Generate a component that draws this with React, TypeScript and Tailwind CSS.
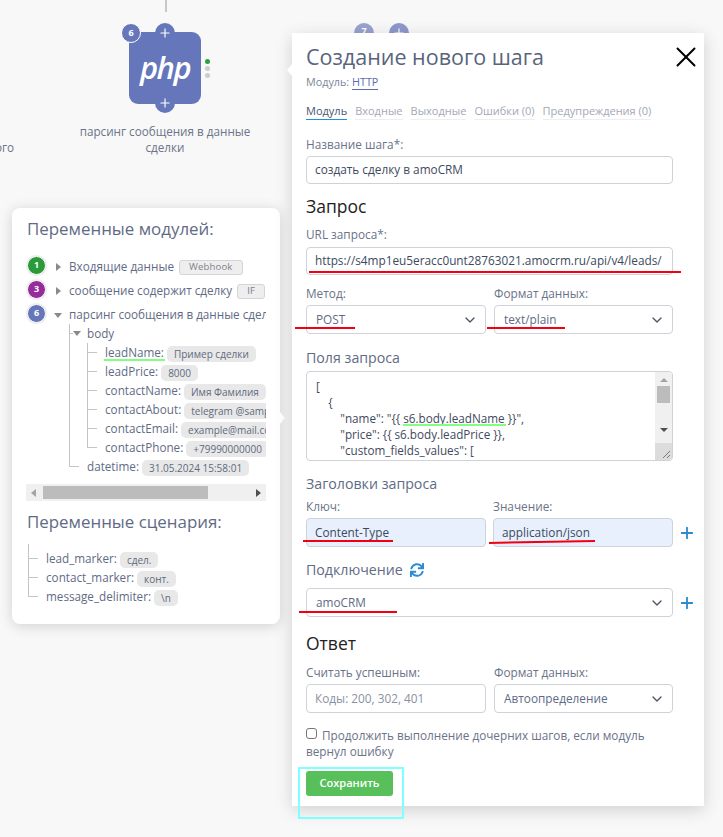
import React from "react";
import { ChevronDown, Plus, X } from "lucide-react";
import { FaSync } from "react-icons/fa";

const text = "text-[#5f6b85]";

function Tag({ children, boxed }: { children: React.ReactNode; boxed?: boolean }) {
  return (
    <span
      className={
        boxed
          ? "ml-[5px] inline-flex h-[15px] shrink-0 items-center rounded-[3px] border border-[#d5d5d5] bg-[#eeeeee] px-[9px] text-[9.5px] leading-none tracking-[0.2px] text-[#80808a]"
          : "ml-[3px] inline-flex h-[16px] shrink-0 translate-y-px items-center rounded-[5px] bg-[#e8e8e8] px-[7px] text-[10px] leading-none text-[#606a7e]"
      }
    >
      {children}
    </span>
  );
}

function Badge({ n, color }: { n: number; color: string }) {
  return (
    <span
      className={`mr-[8px] ml-px flex h-[19px] w-[19px] shrink-0 -translate-y-[2px] items-center justify-center rounded-full border border-white text-[9px] font-bold text-white shadow-[0_0_2px_#bbb] ${color}`}
    >
      {n}
    </span>
  );
}

function TriRight() {
  return <span className="mr-[6px] ml-[2px] h-0 w-0 shrink-0 border-y-[4px] border-l-[5px] border-y-transparent border-l-[#8a8a8a]" />;
}
function TriDown() {
  return <span className="mr-[5px] h-0 w-0 shrink-0 border-x-[4px] border-t-[5px] border-x-transparent border-t-[#8a8a8a]" />;
}

function Leaf({ name, value }: { name: string; value: string }) {
  return (
    <div className="flex h-[19px] items-center whitespace-nowrap">
      <span className="mr-[8px] h-px w-[10px] shrink-0 bg-[#c4c4c4]" />
      <span>{name}:</span>
      <Tag>{value}</Tag>
    </div>
  );
}

function Label({ children, className = "" }: { children: React.ReactNode; className?: string }) {
  return <div className={`text-[11.8px] leading-[16px] text-[#6a7389] ${className}`}>{children}</div>;
}

function Field({ children, className = "", blue }: { children: React.ReactNode; className?: string; blue?: boolean }) {
  return (
    <div
      className={`flex h-[28px] items-center overflow-hidden rounded-[4px] border border-[#cfd3d8] pl-[8px] text-[11.8px] whitespace-nowrap ${
        blue ? "bg-[#e8f0fe] text-[#3c4a60]" : "bg-white text-[#3f4a5e]"
      } ${className}`}
    >
      {children}
    </div>
  );
}

function Select({ children, className = "" }: { children: React.ReactNode; className?: string }) {
  return (
    <div className={`flex h-[29px] items-center justify-between rounded-[4px] border border-[#cfd3d8] bg-white pr-[7px] pl-[9px] text-[11.8px] text-[#5f6b85] ${className}`}>
      <span>{children}</span>
      <ChevronDown size={16} strokeWidth={2} className="text-[#4a5568]" />
    </div>
  );
}

function Tab({ children, active, className = "" }: { children: React.ReactNode; active?: boolean; className?: string }) {
  return (
    <span
      className={`border-b pb-px text-[11px] leading-[15px] ${
        active ? "border-[#1f8fd6] text-[#4a5670]" : "border-[#eeeeee] text-[#a3a8b5]"
      } ${className}`}
    >
      {children}
    </span>
  );
}

export default function App() {
  return (
    <div
      className={`relative h-[837px] w-[723px] overflow-hidden bg-[#f8f8f8] font-['Open_Sans',sans-serif] ${text}`}
    >
      {/* canvas: PHP node */}
      <div className="absolute top-0 left-[165px] h-[12px] w-[2px] bg-[#c8c8c8]" />
      <div className="absolute top-[32px] left-[129px] flex h-[72px] w-[72px] items-center justify-center rounded-[9px] bg-[#6676bb]">
        <span className="-translate-y-[1px] text-[31px] leading-none font-semibold tracking-[-1.5px] text-white italic">php</span>
      </div>
      <div className="absolute top-[23px] left-[155px] flex h-[20px] w-[20px] items-center justify-center rounded-full bg-[#6676bb] text-white">
        <Plus size={14} strokeWidth={2} />
      </div>
      <div className="absolute top-[93px] left-[155px] flex h-[20px] w-[20px] items-center justify-center rounded-full bg-[#6676bb] text-white">
        <Plus size={14} strokeWidth={2} />
      </div>
      <div className="absolute top-[23px] left-[121px] flex h-[20px] w-[20px] items-center justify-center rounded-full border border-white bg-[#6676bb] text-[9px] font-bold text-white">
        6
      </div>
      <div className="absolute top-[59px] left-[205px] flex flex-col gap-[2px]">
        <span className="h-[5px] w-[5px] rounded-full bg-[#2e9e3e]" />
        <span className="h-[5px] w-[5px] rounded-full bg-[#cccccc]" />
        <span className="h-[5px] w-[5px] rounded-full bg-[#cccccc]" />
      </div>
      <div className="absolute top-[123px] left-[70px] w-[190px] text-center text-[11.7px] leading-[16px] text-[#6b7488]">
        парсинг сообщения в данные сделки
      </div>
      <div className="absolute top-[139px] -left-[5px] text-[11.7px] leading-[16px] text-[#6b7488]">ого</div>
      <div className="absolute top-[23px] left-[354px] flex h-[20px] w-[20px] items-start justify-center rounded-full bg-[#98a3cf] pt-[3px] text-[9px] leading-none font-bold text-white">
        7
      </div>
      <div className="absolute top-[23px] left-[389px] flex h-[20px] w-[20px] items-center justify-center rounded-full bg-[#8d99cb] text-white">
        <Plus size={14} strokeWidth={2} />
      </div>

      {/* variables panel */}
      <div className="absolute top-[208px] left-[12px] h-[416px] w-[268px] rounded-[8px] bg-white pt-[9px] pl-[14px] shadow-[0_2px_14px_rgba(0,0,0,0.16)]">
        <div className="absolute top-[204px] -right-[5px] h-0 w-0 border-y-[6px] border-l-[5px] border-y-transparent border-l-white" />
        <div className="ml-px text-[16.9px] leading-[24px]">Переменные модулей:</div>
        <div className="mt-[14px] w-[240px] overflow-hidden text-[11.7px]">
          <div className="flex h-[24px] items-center whitespace-nowrap">
            <Badge n={1} color="bg-[#2a9a3a]" />
            <TriRight />
            <span className="ml-[2px]">Входящие данные</span>
            <Tag boxed>Webhook</Tag>
          </div>
          <div className="flex h-[24px] items-center whitespace-nowrap">
            <Badge n={3} color="bg-[#952c9c]" />
            <TriRight />
            <span className="ml-[2px]">сообщение содержит сделку</span>
            <Tag boxed>IF</Tag>
          </div>
          <div className="flex h-[24px] items-center whitespace-nowrap">
            <Badge n={6} color="bg-[#6676bb]" />
            <TriDown />
            <span className="ml-[2px]">парсинг сообщения в данные сделки</span>
          </div>
          <div className="relative ml-[43px] -mt-[3px]">
            <span className="absolute top-0 left-0 h-[143px] w-px bg-[#c4c4c4]" />
            <div className="flex h-[19px] items-center pl-px">
              <span className="h-px w-[3px] bg-[#c4c4c4]" />
              <TriDown />
              <span className="ml-px">body</span>
            </div>
            <div className="relative ml-[18px]">
              <span className="absolute top-0 left-0 h-[105px] w-px bg-[#c4c4c4]" />
              <Leaf name="leadName" value="Пример сделки" />
              <Leaf name="leadPrice" value="8000" />
              <Leaf name="contactName" value="Имя Фамилия" />
              <Leaf name="contactAbout" value="telegram @sample" />
              <Leaf name="contactEmail" value="example@mail.com" />
              <Leaf name="contactPhone" value="+79990000000" />
            </div>
            <Leaf name="datetime" value="31.05.2024 15:58:01" />
          </div>
          <div className="mt-[8px] flex h-[17px] items-center bg-[#f0f0f0]">
            <span className="ml-[5px] h-0 w-0 border-y-[4px] border-r-[5px] border-y-transparent border-r-[#a3a3a3]" />
            <span className="ml-[7px] h-[13px] w-[165px] bg-[#bcbcbc]" />
            <span className="ml-auto mr-[5px] h-0 w-0 border-y-[4px] border-l-[5px] border-y-transparent border-l-[#505050]" />
          </div>
        </div>
        <div className="mt-[9px] ml-px text-[16.9px] leading-[24px]">Переменные сценария:</div>
        <div className="relative mt-[15px] text-[11.7px]">
          <span className="absolute -top-[5px] left-[2px] h-[53px] w-px bg-[#c4c4c4]" />
          <div className="ml-[2px]">
            <Leaf name="lead_marker" value="сдел." />
            <Leaf name="contact_marker" value="конт." />
            <Leaf name="message_delimiter" value="\n" />
          </div>
        </div>
      </div>

      {/* modal */}
      <div className="absolute top-[33px] left-[292px] h-[773px] w-[412px] bg-white pt-[9px] pr-[31px] pl-[14px] shadow-[0_4px_16px_rgba(0,0,0,0.16)]">
        <div className="absolute top-[31px] -left-[5px] h-0 w-0 border-y-[6px] border-r-[5px] border-y-transparent border-r-white" />
        <X size={34} strokeWidth={1.4} className="absolute top-[7px] right-px text-black" />
        <div className="text-[21.5px] leading-[30px] text-[#59647c]">Создание нового шага</div>
        <div className="mt-[2px] text-[10.8px] leading-[16px] text-[#7d8596]">
          Модуль: <span className="border-b border-[#5c6bb0] text-[#5c6bb0]">HTTP</span>
        </div>
        <div className="mt-[13px] flex gap-[8px]">
          <Tab active>Модуль</Tab>
          <Tab>Входные</Tab>
          <Tab>Выходные</Tab>
          <Tab>Ошибки (0)</Tab>
          <Tab>Предупреждения (0)</Tab>
        </div>
        <Label className="mt-[16px]">Название шага*:</Label>
        <Field className="mt-[4px] h-[28px]">создать сделку в amoCRM</Field>
        <div className="mt-[9px] text-[17.5px] leading-[26px] text-[#222222]">Запрос</div>
        <Label className="mt-[7px]">URL запроса*:</Label>
        <Field className="mt-[5px] pr-[10px]">
          <span className="overflow-hidden text-[#3c4a60]">https://s4mp1eu5eracc0unt28763021.amocrm.ru/api/v4/leads/complex</span>
        </Field>
        <div className="mt-[10px] grid grid-cols-[180px_179px] gap-x-[8px]">
          <Label>Метод:</Label>
          <Label>Формат данных:</Label>
          <Select className="mt-[4px]">POST</Select>
          <Select className="mt-[4px]">text/plain</Select>
        </div>
        <div className="mt-[14px] text-[14.2px] leading-[20px]">Поля запроса</div>
        <div className="mt-[3px] flex h-[90px] overflow-hidden rounded-[4px] border border-[#cfd3d8] text-[11.7px] leading-[16px] text-[#3f4a5e]">
          <div className="flex-1 pt-[6px] pl-[9px] whitespace-pre">
            {'[\n    {\n        "name": "{{ s6.body.leadName }}",\n        "price": {{ s6.body.leadPrice }},\n        "custom_fields_values": ['}
          </div>
          <div className="flex w-[17px] flex-col items-center bg-[#f0f0f0]">
            <span className="mt-[6px] h-0 w-0 border-x-[4px] border-b-[4px] border-x-transparent border-b-[#a3a3a3]" />
            <span className="mt-[4px] h-[17px] w-[13px] bg-[#bcbcbc]" />
            <span className="mt-[25px] h-0 w-0 border-x-[4px] border-t-[4px] border-x-transparent border-t-[#505050]" />
            <span className="relative mt-auto h-[17px] w-[17px] bg-[#dcdcdc]">
              <svg viewBox="0 0 17 17" className="absolute inset-0">
                <path d="M8 15 L15 8 M12 15 L15 12" stroke="#777" strokeWidth="1" />
              </svg>
            </span>
          </div>
        </div>
        <div className="mt-[13px] text-[14.2px] leading-[20px]">Заголовки запроса</div>
        <div className="mt-[4px] grid grid-cols-[180px_180px_auto] items-center gap-x-[7px]">
          <Label className="text-[11.5px]">Ключ:</Label>
          <Label className="text-[11.5px]">Значение:</Label>
          <span />
          <Field blue className="mt-[4px] h-[29px]">Content-Type</Field>
          <Field blue className="mt-[4px] h-[29px]">application/json</Field>
          <Plus size={18} strokeWidth={2.5} className="mt-[4px] -ml-[2px] text-[#2f8bd0]" />
        </div>
        <div className="mt-[13px] flex items-center gap-[7px] text-[14.2px] leading-[20px]">
          Подключение
          <FaSync size={14} className="text-[#2f8bd0]" />
        </div>
        <div className="mt-[8px] grid grid-cols-[367px_auto] items-center gap-x-[7px]">
          <Select>amoCRM</Select>
          <Plus size={18} strokeWidth={2.5} className="-ml-[2px] text-[#2f8bd0]" />
        </div>
        <div className="mt-[13px] text-[17.5px] leading-[26px] text-[#222222]">Ответ</div>
        <div className="mt-[8px] grid grid-cols-[180px_179px] gap-x-[8px]">
          <Label>Считать успешным:</Label>
          <Label>Формат данных:</Label>
          <Field className="mt-[4px] h-[29px] text-[#8a919f]">Коды: 200, 302, 401</Field>
          <Select className="mt-[4px]">Автоопределение</Select>
        </div>
        <div className="mt-[14px] text-[11.75px] leading-[16px] text-[#6a7389]">
          <span className="mr-[5px] inline-block h-[11px] w-[11px] rounded-[3px] border border-[#767676] bg-white align-[1px]" />
          Продолжить выполнение дочерних шагов, если модуль вернул ошибку
        </div>
        <button className="mt-[12px] block h-[25px] w-[87px] rounded-[3px] bg-[#57c05b] text-[11px] font-semibold text-white">
          Сохранить
        </button>
      </div>

      {/* hand-drawn annotations over the screenshot */}
      <div className="absolute top-[271px] left-[309px] h-[2px] w-[372px] bg-[#f00010]" />
      <div className="absolute top-[327px] left-[295px] h-[2px] w-[60px] bg-[#f00010]" />
      <div className="absolute top-[327px] left-[487px] h-[2px] w-[78px] bg-[#f00010]" />
      <div className="absolute top-[540px] left-[303px] h-[2px] w-[90px] bg-[#f00010]" />
      <div className="absolute top-[541px] left-[489px] h-[2px] w-[106px] -rotate-1 bg-[#f00010]" />
      <div className="absolute top-[611px] left-[299px] h-[2px] w-[98px] bg-[#f00010]" />
      <div className="absolute top-[359px] left-[104px] h-[2px] w-[61px] bg-[#80ff80]" />
      <div className="absolute top-[424px] left-[403px] h-[2px] w-[103px] bg-[#80ff80]" />
      <div className="absolute top-[767px] left-[298px] h-[52px] w-[106px] border-2 border-[#80ffff]" />
    </div>
  );
}
